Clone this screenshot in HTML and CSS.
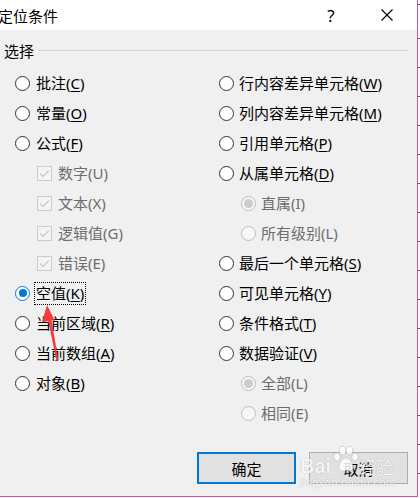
FILE: index.html
```html
<!DOCTYPE html>
<html lang="zh-CN">
<head>
<meta charset="utf-8">
<title>定位条件</title>
<link rel="stylesheet" href="styles.css">
</head>
<body>
<div class="dialog">
  <div class="titlebar">
    <span class="title">定位条件</span>
    <span class="tbtn help">?</span>
    <span class="tbtn close"><svg width="12" height="12" viewBox="0 0 12 12"><path d="M0.5 0.5 L11.5 11.5 M11.5 0.5 L0.5 11.5" stroke="#000" stroke-width="1.1" fill="none"/></svg></span>
  </div>
  <div class="content">
    <div class="group-head"><span class="group-title">选择</span><span class="group-line"></span></div>
    <div class="cols">
      <div class="col">
        <div class="row"><span class="radio"></span><span class="lbl">批注(<u>C</u>)</span></div>
        <div class="row"><span class="radio"></span><span class="lbl">常量(<u>O</u>)</span></div>
        <div class="row"><span class="radio"></span><span class="lbl">公式(<u>F</u>)</span></div>
        <div class="row sub"><span class="check"><svg width="13" height="13" viewBox="0 0 13 13"><path d="M2.2 6.6 L5 9.4 L10.8 3.6" stroke="#c6c6c6" stroke-width="1.3" fill="none"/></svg></span><span class="lbl dis">数字(U)</span></div>
        <div class="row sub"><span class="check"><svg width="13" height="13" viewBox="0 0 13 13"><path d="M2.2 6.6 L5 9.4 L10.8 3.6" stroke="#c6c6c6" stroke-width="1.3" fill="none"/></svg></span><span class="lbl dis">文本(X)</span></div>
        <div class="row sub"><span class="check"><svg width="13" height="13" viewBox="0 0 13 13"><path d="M2.2 6.6 L5 9.4 L10.8 3.6" stroke="#c6c6c6" stroke-width="1.3" fill="none"/></svg></span><span class="lbl dis">逻辑值(G)</span></div>
        <div class="row sub"><span class="check"><svg width="13" height="13" viewBox="0 0 13 13"><path d="M2.2 6.6 L5 9.4 L10.8 3.6" stroke="#c6c6c6" stroke-width="1.3" fill="none"/></svg></span><span class="lbl dis">错误(E)</span></div>
        <div class="row"><span class="radio on"></span><span class="lbl focus">空值(<u>K</u>)</span></div>
        <div class="row"><span class="radio"></span><span class="lbl">当前区域(<u>R</u>)</span></div>
        <div class="row"><span class="radio"></span><span class="lbl">当前数组(<u>A</u>)</span></div>
        <div class="row"><span class="radio"></span><span class="lbl">对象(<u>B</u>)</span></div>
      </div>
      <div class="col right">
        <div class="row"><span class="radio"></span><span class="lbl">行内容差异单元格(<u>W</u>)</span></div>
        <div class="row"><span class="radio"></span><span class="lbl">列内容差异单元格(<u>M</u>)</span></div>
        <div class="row"><span class="radio"></span><span class="lbl">引用单元格(<u>P</u>)</span></div>
        <div class="row"><span class="radio"></span><span class="lbl">从属单元格(<u>D</u>)</span></div>
        <div class="row sub"><span class="radio dis on"></span><span class="lbl dis">直属(I)</span></div>
        <div class="row sub"><span class="radio dis"></span><span class="lbl dis">所有级别(L)</span></div>
        <div class="row"><span class="radio"></span><span class="lbl">最后一个单元格(<u>S</u>)</span></div>
        <div class="row"><span class="radio"></span><span class="lbl">可见单元格(<u>Y</u>)</span></div>
        <div class="row"><span class="radio"></span><span class="lbl">条件格式(<u>T</u>)</span></div>
        <div class="row"><span class="radio"></span><span class="lbl">数据验证(<u>V</u>)</span></div>
        <div class="row sub"><span class="radio dis on"></span><span class="lbl dis">全部(L)</span></div>
        <div class="row sub"><span class="radio dis"></span><span class="lbl dis">相同(E)</span></div>
      </div>
    </div>
    <div class="buttons">
      <button class="btn default">确定</button>
      <button class="btn">取消</button>
    </div>
  </div>

  <svg class="arrow" width="30" height="70" viewBox="0 0 30 70">
    <polygon points="7,1 15,17 11.5,16.3 18.5,57 16.5,57 8.3,17 2,18.5" fill="#f23b3b"/>
  </svg>

  <div class="watermark">
    <div class="wm-top">
      <span class="wm-bai">Bai</span>
      <svg class="wm-paw" width="28" height="28" viewBox="0 0 28 28">
        <g fill="rgba(255,255,255,0.85)" stroke="rgba(150,150,150,0.45)" stroke-width="0.8">
          <ellipse cx="5" cy="12" rx="3.2" ry="4"/>
          <ellipse cx="10.5" cy="5.5" rx="3.2" ry="4.2"/>
          <ellipse cx="17.5" cy="5.5" rx="3.2" ry="4.2"/>
          <ellipse cx="23" cy="12" rx="3.2" ry="4"/>
          <path d="M14 13 C10 13 6 20 7 23.5 C8 27 12 26 14 25.5 C16 26 20 27 21 23.5 C22 20 18 13 14 13 Z"/>
        </g>
      </svg>
      <span class="wm-jy">经验</span>
    </div>
    <div class="wm-url">jingyan.baidu.com</div>
  </div>
</div>
</body>
</html>
```

FILE: styles.css
```css
* { box-sizing: border-box; }

html, body {
  margin: 0;
  padding: 0;
}

body {
  width: 420px;
  height: 498px;
  overflow: hidden;
  background-color: #ffffff;
  background-image: repeating-linear-gradient(to bottom, transparent 0, transparent 28px, #555 28px, #555 29px);
  background-position: 0 10px;
  font-family: "Noto Sans", "Noto Sans CJK SC", sans-serif;
  color: #000;
}

.dialog {
  position: relative;
  width: 418px;
  height: 497px;
  background: #f0f0f0;
  border-right: 1px solid #d4509a;
  border-bottom: 1px solid #d4509a;
  display: flex;
  flex-direction: column;
}

.titlebar {
  height: 30px;
  background: #ffffff;
  display: flex;
  align-items: center;
  padding-right: 7px;
  gap: 10px;
  flex: none;
}

.title {
  flex: 1;
  margin-left: -2px;
  font-family: "Noto Sans CJK SC", sans-serif;
  font-size: 15px;
  line-height: 30px;
  padding-top: 1px;
}

.tbtn {
  width: 46px;
  height: 30px;
  display: flex;
  align-items: center;
  justify-content: center;
}

.help {
  font-family: "Noto Sans", sans-serif;
  font-size: 17px;
  padding-top: 1px;
}

.close svg { display: block; }

.content {
  flex: 1;
  display: flex;
  flex-direction: column;
}

.group-head {
  margin-top: 12px;
  height: 18px;
  display: flex;
  align-items: center;
  padding-left: 4px;
  padding-right: 8px;
  gap: 4px;
}

.group-title {
  font-family: "Noto Sans CJK SC", sans-serif;
  font-size: 15px;
  line-height: 18px;
}

.group-line {
  flex: 1;
  height: 1px;
  background: #d5d5d5;
  margin-top: -2px;
}

.cols {
  margin-top: 8px;
  padding-left: 15px;
  display: grid;
  grid-template-columns: 204px 1fr;
}

.col {
  display: flex;
  flex-direction: column;
}

.row {
  height: 30px;
  display: flex;
  align-items: center;
  gap: 6px;
  font-size: 15px;
  line-height: 20px;
}

.col.right .row { gap: 5px; }

.row.sub { padding-left: 22px; }

.lbl { white-space: nowrap; }

.lbl u {
  text-decoration: underline;
  text-underline-offset: 2px;
  text-decoration-thickness: 1px;
}

.lbl.dis { color: #6d6d6d; }

.lbl.focus {
  margin-left: -2px;
  padding: 1px 1px;
  border: 1px dotted #000;
  line-height: 19px;
}

.radio {
  flex: none;
  width: 15px;
  height: 15px;
  border: 1px solid #333;
  border-radius: 50%;
  background: #ffffff;
  display: flex;
  align-items: center;
  justify-content: center;
}

.radio.on { border-color: #0078d7; }

.radio.on::after {
  content: "";
  width: 8px;
  height: 8px;
  border-radius: 50%;
  background: #0078d7;
}

.radio.dis {
  border-color: #bcbcbc;
  background: #f7f7f7;
}

.radio.dis.on::after {
  background: #cccccc;
  width: 9px;
  height: 9px;
}

.check {
  flex: none;
  width: 15px;
  height: 15px;
  border: 1px solid #cccccc;
  background: #f4f4f4;
  display: flex;
  align-items: center;
  justify-content: center;
}

.check svg { display: block; }

.buttons {
  margin-top: 24px;
  display: flex;
  justify-content: flex-end;
  gap: 13px;
  padding-right: 9px;
}

.btn {
  width: 99px;
  height: 32px;
  margin: 0;
  padding: 0;
  background: #e1e1e1;
  border: 1px solid #adadad;
  font-family: "Noto Sans CJK SC", sans-serif;
  font-size: 15px;
  color: #000;
}

.btn.default {
  border: 2px solid #0078d7;
}

.arrow {
  position: absolute;
  left: 40px;
  top: 304px;
}

.watermark {
  position: absolute;
  left: 300px;
  top: 441px;
  width: 96px;
  color: rgba(255, 255, 255, 0.9);
  text-shadow: 0 0 1px rgba(110, 110, 110, 0.55);
  pointer-events: none;
}

.wm-top {
  display: flex;
  align-items: flex-end;
  height: 36px;
}

.wm-bai {
  font-family: "Liberation Sans", sans-serif;
  font-size: 20px;
  font-weight: bold;
  line-height: 20px;
  margin-bottom: 1px;
}

.wm-paw {
  display: block;
  margin-left: 1px;
  margin-bottom: 4px;
}

.wm-jy {
  font-family: "Noto Sans CJK SC", sans-serif;
  font-size: 17px;
  line-height: 20px;
  margin-left: -1px;
}

.wm-url {
  font-family: "Liberation Sans", sans-serif;
  font-size: 11px;
  line-height: 10px;
  letter-spacing: 0.4px;
}
```
